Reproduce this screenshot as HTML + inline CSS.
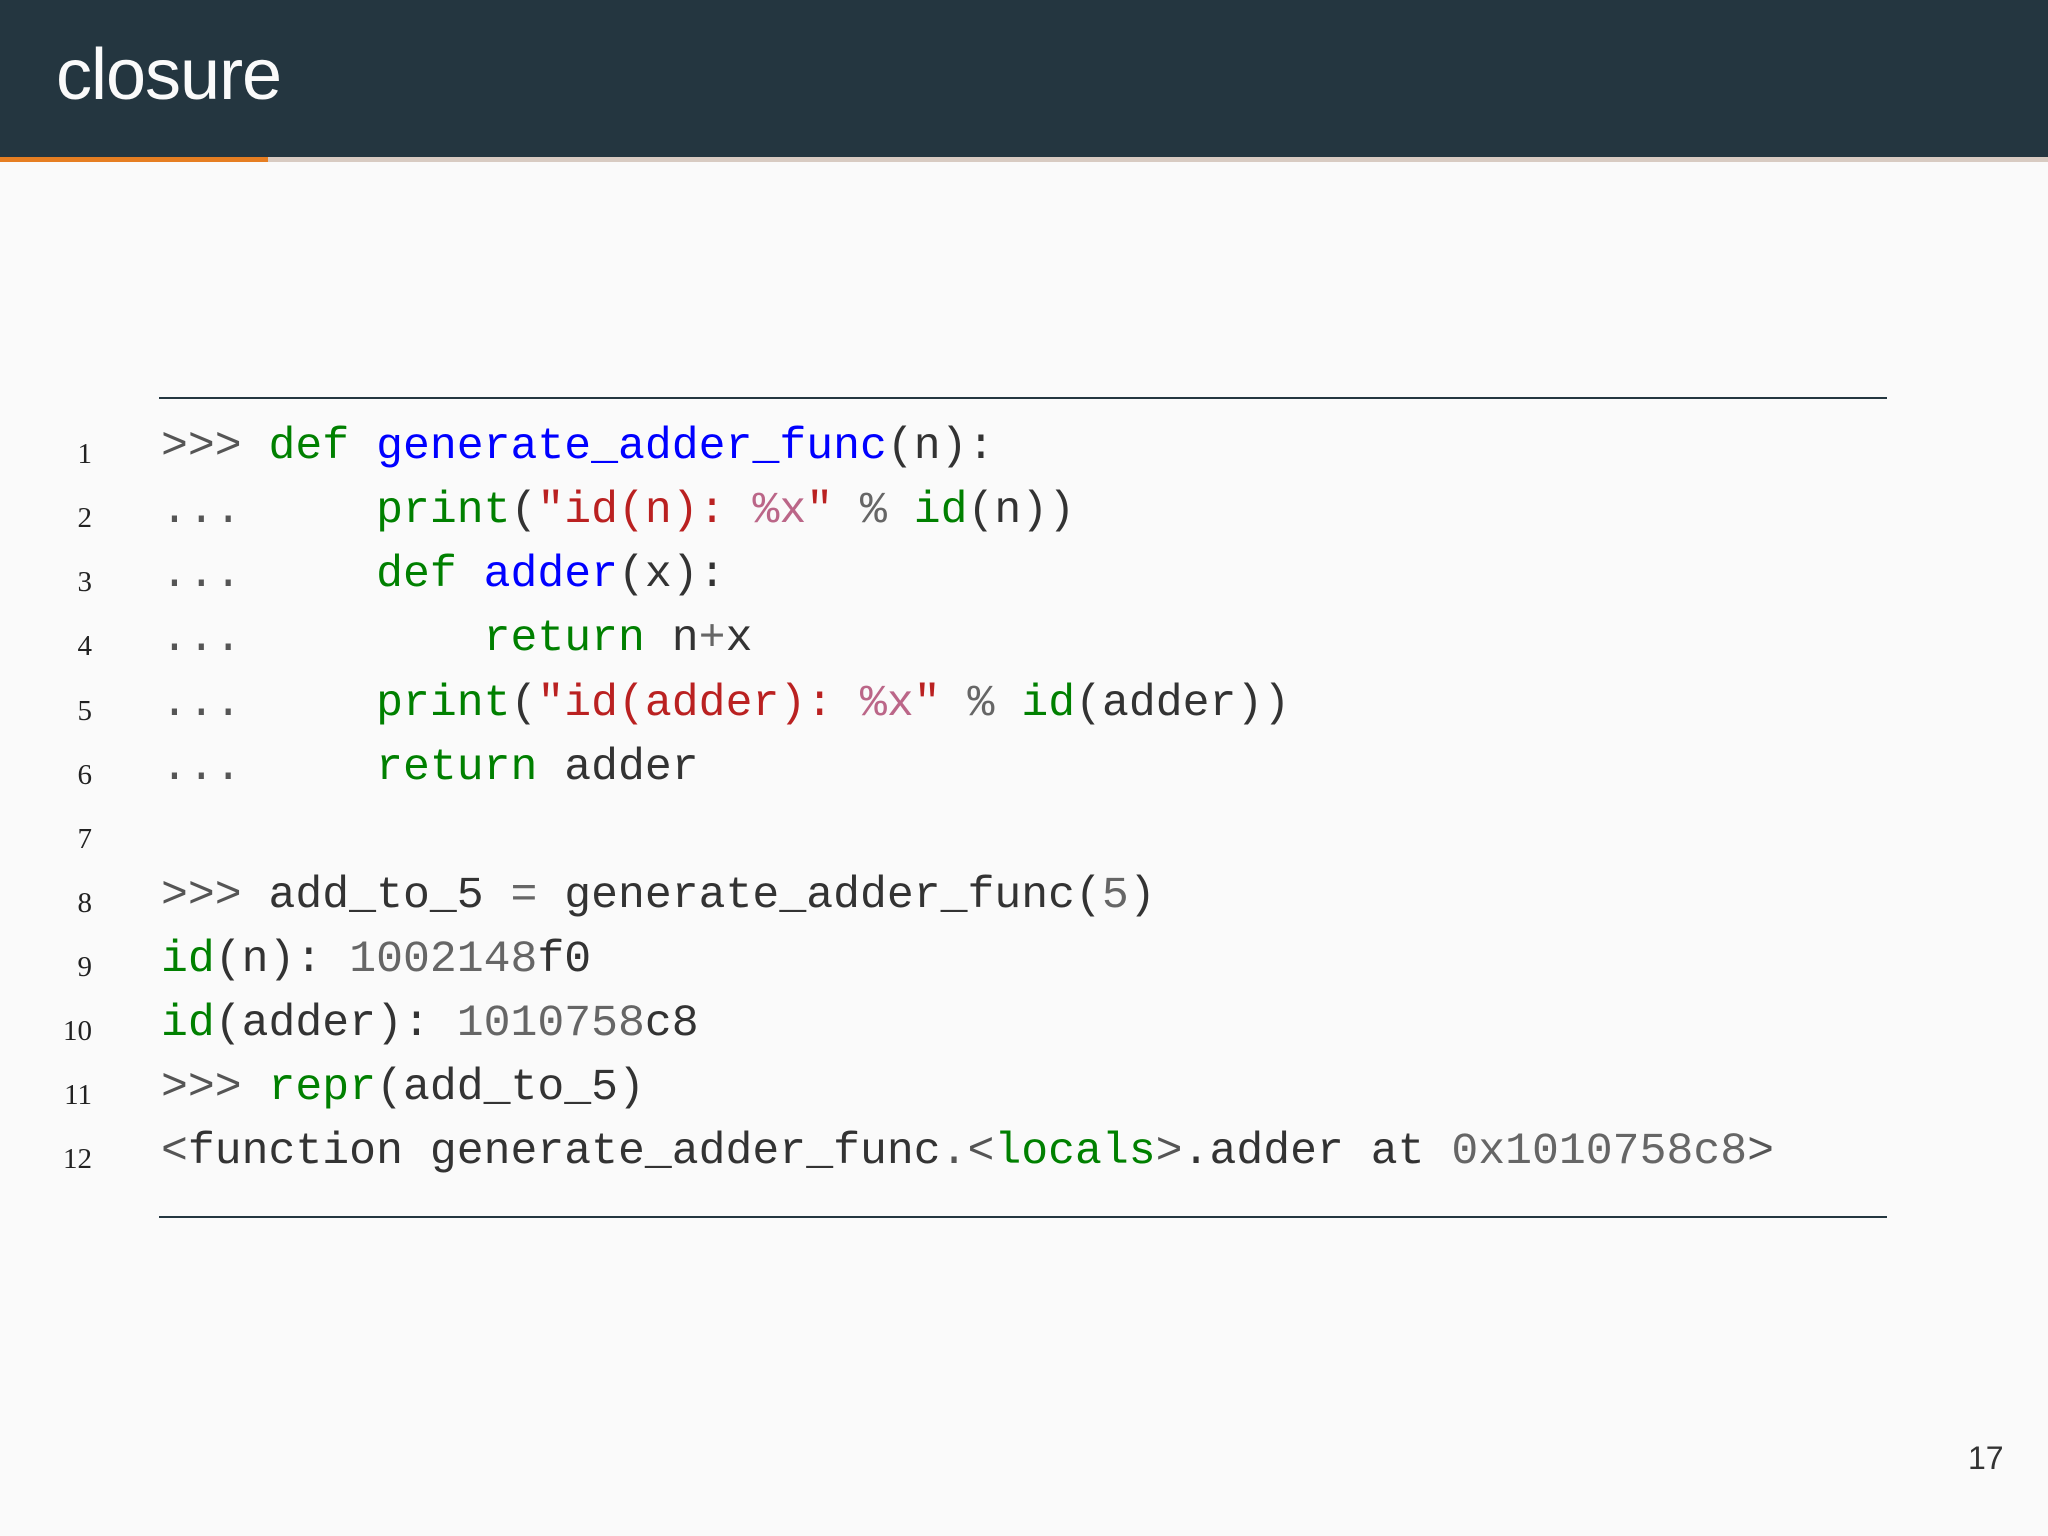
<!DOCTYPE html>
<html><head><meta charset="utf-8"><style>
body{margin:0;width:2048px;height:1536px;background:#fafafa;position:relative;overflow:hidden}
.hdr{position:absolute;left:0;top:0;width:2048px;height:157px;background:#243640}
.bar1{position:absolute;left:0;top:157px;width:268px;height:5px;background:#e67e22}
.bar2{position:absolute;left:268px;top:157px;width:1780px;height:5px;background:#d8cbc2}
.title{position:absolute;left:56px;top:34px;color:#fafafa;font:72px "Liberation Sans",sans-serif;letter-spacing:-1px}
.rule{position:absolute;left:159px;width:1728px;height:2px;background:#243640}
.ln{position:absolute;right:1956px;font:29px "Liberation Serif",serif;color:#222}
.cl{position:absolute;left:161px;font:44.8px "Liberation Mono",monospace;color:#333;white-space:pre}
.g{color:#008000}.b{color:#0000ff}.s{color:#ba2121}.i{color:#bb6688}.o{color:#666}.p{color:#555}
.pn{position:absolute;left:1968px;top:1440px;font:32px "Liberation Sans",sans-serif;color:#333}
</style></head><body>
<div class="hdr"></div><div class="bar1"></div><div class="bar2"></div>
<div class="title">closure</div>
<div class="rule" style="top:397px"></div>
<div class="rule" style="top:1216px"></div>
<div class="ln" style="top:438px">1</div>
<div class="ln" style="top:502px">2</div>
<div class="ln" style="top:566px">3</div>
<div class="ln" style="top:630px">4</div>
<div class="ln" style="top:695px">5</div>
<div class="ln" style="top:759px">6</div>
<div class="ln" style="top:823px">7</div>
<div class="ln" style="top:887px">8</div>
<div class="ln" style="top:951px">9</div>
<div class="ln" style="top:1015px">10</div>
<div class="ln" style="top:1079px">11</div>
<div class="ln" style="top:1143px">12</div>
<div class="cl" style="top:422px"><span class="p">&gt;&gt;&gt;</span> <span class="g">def</span> <span class="b">generate_adder_func</span>(n):</div>
<div class="cl" style="top:486px"><span class="p">...</span>     <span class="g">print</span>(<span class="s">"id(n): </span><span class="i">%x</span><span class="s">"</span> <span class="o">%</span> <span class="g">id</span>(n))</div>
<div class="cl" style="top:550px"><span class="p">...</span>     <span class="g">def</span> <span class="b">adder</span>(x):</div>
<div class="cl" style="top:614px"><span class="p">...</span>         <span class="g">return</span> n<span class="o">+</span>x</div>
<div class="cl" style="top:679px"><span class="p">...</span>     <span class="g">print</span>(<span class="s">"id(adder): </span><span class="i">%x</span><span class="s">"</span> <span class="o">%</span> <span class="g">id</span>(adder))</div>
<div class="cl" style="top:743px"><span class="p">...</span>     <span class="g">return</span> adder</div>
<div class="cl" style="top:871px"><span class="p">&gt;&gt;&gt;</span> add_to_5 <span class="o">=</span> generate_adder_func(<span class="o">5</span>)</div>
<div class="cl" style="top:935px"><span class="g">id</span>(n): <span class="o">1002148</span>f0</div>
<div class="cl" style="top:999px"><span class="g">id</span>(adder): <span class="o">1010758</span>c8</div>
<div class="cl" style="top:1063px"><span class="p">&gt;&gt;&gt;</span> <span class="g">repr</span>(add_to_5)</div>
<div class="cl" style="top:1127px"><span class="p">&lt;</span>function generate_adder_func<span class="p">.&lt;</span><span class="g">locals</span><span class="p">&gt;</span>.adder at <span class="o">0x1010758c8</span><span class="p">&gt;</span></div>
<div class="pn">17</div>
</body></html>
